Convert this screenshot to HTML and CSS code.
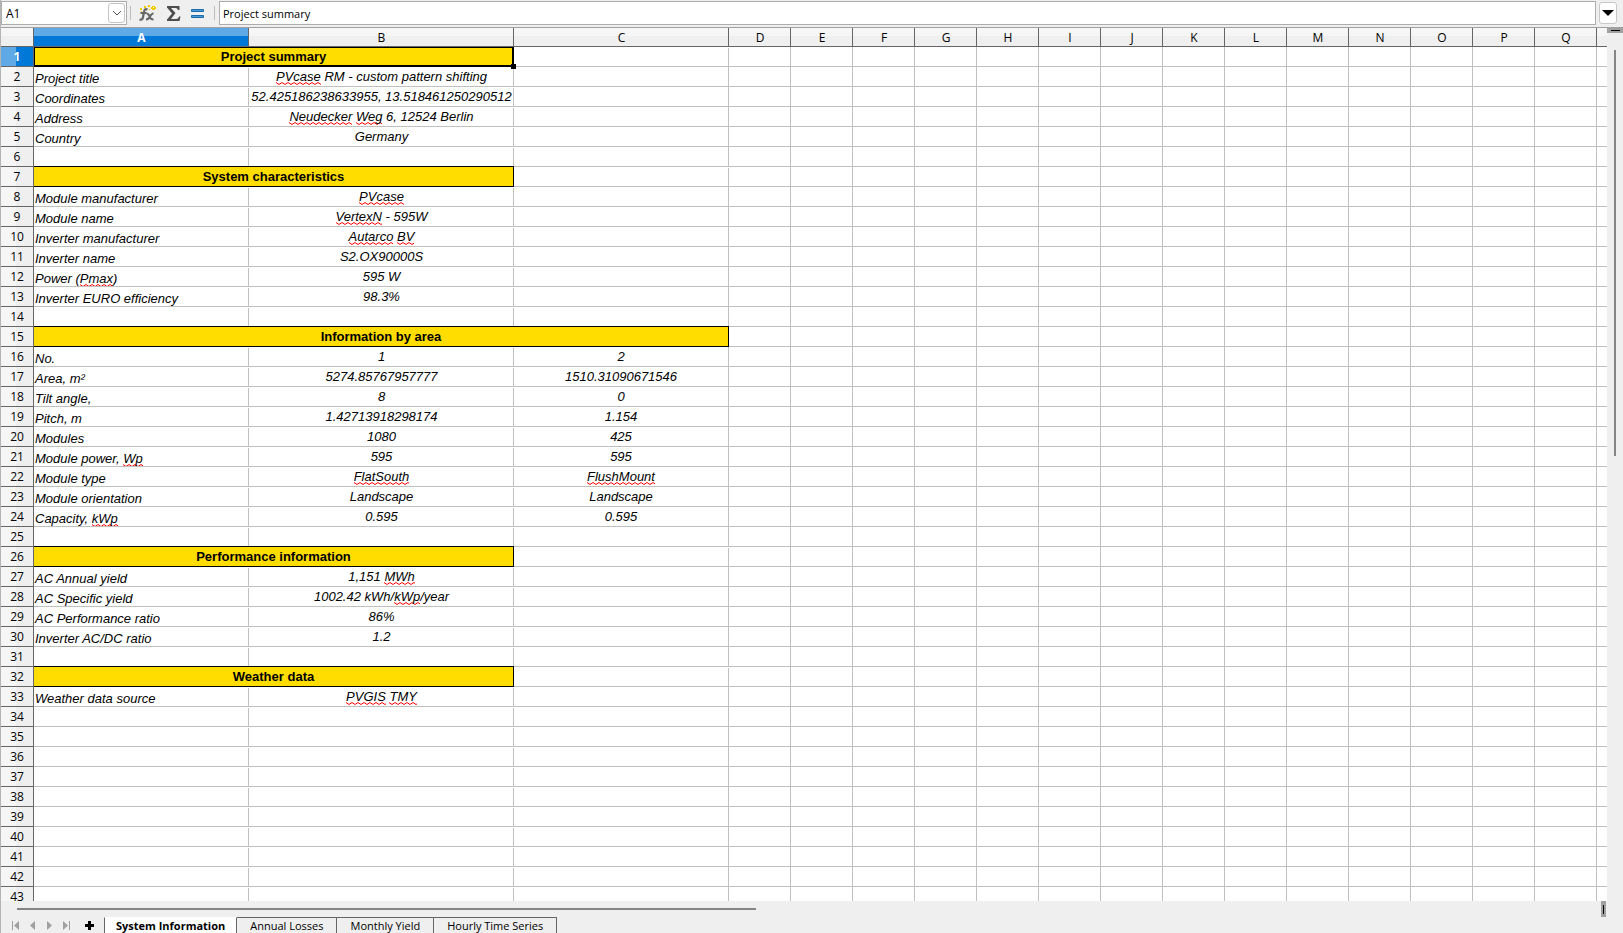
FILE: index.html
```html
<!DOCTYPE html>
<html lang="en">
<head>
  <meta charset="UTF-8" />
  <meta name="viewport" content="width=device-width, initial-scale=1.0"/>
  <title>Project summary</title>
  <link rel="stylesheet" href="styles.css">
</head>
<body>
  <!-- Formula bar -->
  <header class="formula-bar">
    <div class="name-box">
      <input class="name-input" type="text" value="A1" aria-label="Name box" />
      <button class="name-drop" aria-label="Open name list">
        <svg width="10" height="6" viewBox="0 0 10 6"><path d="M1 1l4 4 4-4" fill="none" stroke="#555" /></svg>
      </button>
    </div>
    <div class="separator"></div>
    <div class="tools">
      <button class="tool" aria-label="Function wizard">
        <svg width="17" height="17" viewBox="0 0 17 17">
          <g fill="none" stroke="#666">
            <path d="M8.500 4.500Q5.500 3 5 7L4 12Q3.500 15.500 .5 14.500M1.500 8h6" stroke-width="2.200" />
            <path d="M7.500 8.500q2 0 3 3t4 3M14.500 8.500q-2 0-3.500 3t-4 3" stroke-width="2" />
          </g>
          <path d="M1 3h2v2H1zM5 1h2v2H5zM9 0h2v2H9zM13 1h3v1h1v2h-1v1h-3V4h-1V2h1zM10 4h1v1h-1zM2 6h1v1H2z" fill="#f0cc00" />
          <path d="M14 2h1v1h-1z" fill="#fff" />
        </svg>
      </button>
      <button class="tool" aria-label="Select function">
        <svg width="14" height="17" viewBox="0 0 14 17"><path d="M0 1h12.500v4h-1.500q-.5-2-2.500-2H4l4.500 5L4 14h5q2.500 0 3-2.500h1.500L12.500 16H0v-1.500l5-6-5-6z" fill="#4d4d4d" /></svg>
      </button>
      <button class="tool" aria-label="Formula">
        <svg width="13" height="9" viewBox="0 0 13 9"><path d="M.5 .5h12v2H.5zM.5 6.500h12v2H.5z" fill="#4a9ada" stroke="#1b6cab" /></svg>
      </button>
    </div>
    <div class="separator"></div>
    <input class="formula-input" type="text" value="Project summary" aria-label="Input line" />
    <button class="expand" aria-label="Expand formula bar">
      <svg width="12" height="6" viewBox="0 0 12 6"><path d="M0 0h12L6 6z" /></svg>
    </button>
  </header>

  <!-- Sheet -->
  <main class="workspace">
    <div class="sheet" id="sheet">
      <table class="grid">
        <colgroup id="cols"></colgroup>
        <thead><tr id="letters"></tr></thead>
        <tbody id="rows"></tbody>
      </table>
    </div>
    <div class="v-scroll">
      <div class="v-split"></div>
      <div class="v-thumb"></div>
    </div>
  </main>

  <div class="h-scroll">
    <div class="h-thumb"></div>
    <div class="h-split"></div>
  </div>

  <!-- Sheet tabs -->
  <footer class="tab-bar">
    <button class="nav" aria-label="First sheet"><svg width="8" height="9" viewBox="0 0 8 9"><path d="M0 0h1v9H0zM7 0v9L2 4.500z" /></svg></button>
    <button class="nav" aria-label="Previous sheet"><svg width="8" height="9" viewBox="0 0 8 9"><path d="M6 0v9L1 4.500z" /></svg></button>
    <button class="nav" aria-label="Next sheet"><svg width="8" height="9" viewBox="0 0 8 9"><path d="M1 0v9l5-4.500z" /></svg></button>
    <button class="nav" aria-label="Last sheet"><svg width="8" height="9" viewBox="0 0 8 9"><path d="M6 0h1v9H6zM0 0v9l5-4.500z" /></svg></button>
    <button class="add" aria-label="Add sheet"><svg width="9" height="9" viewBox="0 0 9 9"><path d="M3 0h3v3h3v3H6v3H3V6H0V3h3z" /></svg></button>
    <button class="tab active">System Information</button>
    <button class="tab">Annual Losses</button>
    <button class="tab">Monthly Yield</button>
    <button class="tab">Hourly Time Series</button>
  </footer>

  <script>
    // words between * * are flagged by the spell checker
    const data = {
      1: ["Project summary"],
      2: ["Project title", "*PVcase* RM - custom pattern shifting"],
      3: ["Coordinates", "52.425186238633955, 13.518461250290512"],
      4: ["Address", "*Neudecker* *Weg* 6, 12524 Berlin"],
      5: ["Country", "Germany"],
      7: ["System characteristics"],
      8: ["Module manufacturer", "*PVcase*"],
      9: ["Module name", "*VertexN* - 595W"],
      10: ["Inverter manufacturer", "*Autarco* *BV*"],
      11: ["Inverter name", "S2.OX90000S"],
      12: ["Power (*Pmax*)", "595 W"],
      13: ["Inverter EURO efficiency", "98.3%"],
      15: ["Information by area"],
      16: ["No.", "1", "2"],
      17: ["Area, m²", "5274.85767957777", "1510.31090671546"],
      18: ["Tilt angle,", "8", "0"],
      19: ["Pitch, m", "1.42713918298174", "1.154"],
      20: ["Modules", "1080", "425"],
      21: ["Module power, *Wp*", "595", "595"],
      22: ["Module type", "*FlatSouth*", "*FlushMount*"],
      23: ["Module orientation", "Landscape", "Landscape"],
      24: ["Capacity, *kWp*", "0.595", "0.595"],
      26: ["Performance information"],
      27: ["AC Annual yield", "1,151 *MWh*"],
      28: ["AC Specific yield", "1002.42 kWh/*kWp*/year"],
      29: ["AC Performance ratio", "86%"],
      30: ["Inverter AC/DC ratio", "1.2"],
      32: ["Weather data"],
      33: ["Weather data source", "*PVGIS* *TMY*"]
    };
    const titleSpan = { 1: 2, 7: 2, 15: 3, 26: 2, 32: 2 };

    const sheet = document.getElementById("sheet");
    const colCount = 3 + Math.max(1, Math.ceil((sheet.clientWidth - 728) / 62));
    const rowCount = Math.max(33, Math.ceil((sheet.clientHeight - 19) / 20));

    function mark(text) {
      return text.replace(/\*(.+?)\*/g, '<span class="typo">$1</span>');
    }

    let cols = '<col class="col-head"><col class="col-a"><col class="col-b"><col class="col-c">';
    let letters = '<th class="corner"></th>';
    for (let c = 0; c < colCount; c++) {
      if (c > 2) cols += '<col class="col-std">';
      const inView = 33 + 695 + (c - 2) * 62 - 31 < sheet.clientWidth;
      letters += `<th class="letter${c === 0 ? " selected" : ""}" scope="col">${inView ? String.fromCharCode(65 + c) : ""}</th>`;
    }
    document.getElementById("cols").innerHTML = cols;
    document.getElementById("letters").innerHTML = letters;

    let html = "";
    for (let r = 1; r <= rowCount; r++) {
      const row = data[r] || [];
      const span = titleSpan[r] || 0;
      html += `<tr><th class="number${r === 1 ? " selected" : ""}" scope="row">${r}</th>`;
      if (span) {
        html += `<td class="title${r === 1 ? " cursor" : ""}" colspan="${span}">${row[0]}</td>`;
      }
      for (let c = span; c < colCount; c++) {
        const kind = c === 0 ? "label" : c < 3 ? "value" : "";
        html += `<td class="${kind}">${mark(row[c] || "")}</td>`;
      }
      html += "</tr>";
    }
    document.getElementById("rows").innerHTML = html;
  </script>
</body>
</html>
```
FILE: styles.css
```css
* {
  box-sizing: border-box;
}

body {
  margin: 0;
  height: 100vh;
  display: flex;
  flex-direction: column;
  overflow: hidden;
  background-color: #efefef;
  border-left: 1px solid #b4b4b4;
  font-family: "Open Sans", "Noto Sans", sans-serif;
  font-size: 11px;
  color: #000;
}

button,
input {
  font: inherit;
  color: inherit;
  margin: 0;
  padding: 0;
  border: none;
  background: none;
}

button {
  display: flex;
  align-items: center;
  justify-content: center;
}

/* formula bar */
.formula-bar {
  display: flex;
  align-items: center;
  flex: none;
  height: 28px;
  padding: 1px 6px 2px 0;
  border-bottom: 1px solid #a0a0a0;
}

.name-box {
  display: flex;
  width: 126px;
  height: 24px;
  padding: 1px;
  border: 1px solid #adadad;
  background-color: #fff;
}

.name-input {
  flex: 1;
  min-width: 0;
  padding-left: 3px;
  font-size: 12px;
}

.name-drop {
  width: 17px;
  border: 1px solid #c4c4c4;
  border-radius: 3px;
}

.separator {
  width: 1px;
  height: 14px;
  margin: 0 4px 0 3px;
  background-color: #bcbcbc;
}

.tools {
  display: flex;
  align-items: center;
  justify-content: space-between;
  width: 65px;
  margin: 0 7px 0 4px;
}

.formula-input {
  flex: 1;
  min-width: 0;
  height: 24px;
  padding-left: 3px;
  border: 1px solid #adadad;
  background-color: #fff;
}

.expand {
  width: 18px;
  height: 22px;
  margin-left: 3px;
  border: 1px solid #c8c8c8;
  border-radius: 3px;
  background-color: #fff;
}

/* sheet */
.workspace {
  flex: 1;
  min-height: 0;
  display: flex;
}

.sheet {
  flex: 1;
  min-width: 0;
  overflow: hidden;
  background-color: #fff;
}

.grid {
  table-layout: fixed;
  width: 0;
  border-collapse: separate;
  border-spacing: 0;
}

.col-head {
  width: 33px;
}

.col-a,
.col-c {
  width: 215px;
}

.col-b {
  width: 265px;
}

.col-std {
  width: 62px;
}

.grid th,
.grid td {
  height: 20px;
  padding: 0;
  overflow: hidden;
  white-space: nowrap;
}

.grid th {
  font-size: 12px;
  font-weight: 400;
  line-height: 18px;
  border-right: 1px solid #666;
  border-bottom: 1px solid #666;
}

.grid thead th {
  height: 19px;
  padding: 2px 0 0 1px;
  line-height: 16px;
}

.letter,
.corner {
  background: linear-gradient(#f6f6f6 45%, #efefef 45%);
}

.number {
  background: linear-gradient(90deg, #f6f6f6 48%, #efefef 48%);
}

.grid .selected {
  color: #fff;
  font-weight: 700;
}

.letter.selected {
  background: linear-gradient(#5fa9e6 45%, #0078d7 45%);
}

.number.selected {
  background: linear-gradient(90deg, #5fa9e6 48%, #0078d7 48%);
}

.grid td {
  font-family: "Liberation Sans", Arial, sans-serif;
  font-size: 13px;
  line-height: 15px;
  vertical-align: top;
  border-right: 1px solid #c0c0c0;
  border-bottom: 1px solid #c0c0c0;
}

.grid .label {
  padding: 4px 0 0 1px;
  font-style: italic;
}

.grid .value {
  padding-top: 2px;
  font-style: italic;
  text-align: center;
}

/* column lines stop short of the row line above */
.grid .label,
.grid .value:nth-child(3) {
  border-right: none;
  background: linear-gradient(#c0c0c0, #c0c0c0) no-repeat right 0 top 1px / 1px 100%;
}

.grid .title {
  position: relative;
  padding-top: 2px;
  overflow: visible;
  font-weight: 700;
  text-align: center;
  background-color: #ffdd00;
  border-color: #000;
  box-shadow: 0 -1px 0 #000;
}

.grid .cursor {
  box-shadow: inset 1px 1px 0 #000, inset -1px -1px 0 #000;
}

.cursor::after {
  content: '';
  position: absolute;
  right: -3px;
  bottom: -3px;
  width: 5px;
  height: 5px;
  background-color: #000;
}

.typo {
  padding-bottom: 1px;
  background: url("data:image/svg+xml,%3Csvg xmlns='http://www.w3.org/2000/svg' width='6' height='3'%3E%3Cpath d='M0 .5L3 2.500 6 .5' fill='none' stroke='red'/%3E%3C/svg%3E") repeat-x left bottom;
}

/* scrollbars */
.v-scroll {
  width: 16px;
  display: flex;
  flex-direction: column;
  align-items: center;
}

.v-split {
  width: 16px;
  height: 5px;
  background: linear-gradient(#000, #000) no-repeat center / 9px 1px #a0a0a0;
}

.v-thumb {
  width: 2px;
  height: 46.5%;
  margin-top: 17px;
  background-color: #858585;
}

.h-scroll {
  flex: none;
  display: flex;
  justify-content: space-between;
  height: 16px;
  padding: 0 17px 0 16px;
}

.h-thumb {
  width: 46.5%;
  height: 2px;
  margin-top: 7px;
  background-color: #858585;
}

.h-split {
  width: 5px;
  height: 16px;
  background: linear-gradient(#000, #000) no-repeat center / 1px 9px #a0a0a0;
}

/* sheet tabs */
.tab-bar {
  flex: none;
  display: flex;
  height: 16px;
  padding-left: 6px;
}

.nav {
  width: 17px;
  fill: #a0a0a0;
}

.add {
  width: 29px;
}

.tab {
  height: 16px;
  padding: 0 13px;
  line-height: 15px;
  border-top: 1px solid #666;
  border-right: 1px solid #666;
}

.tab.active {
  padding: 0 11px;
  font-weight: 700;
  background-color: #fff;
  border-top-color: #fff;
  border-left: 1px solid #666;
}
```
